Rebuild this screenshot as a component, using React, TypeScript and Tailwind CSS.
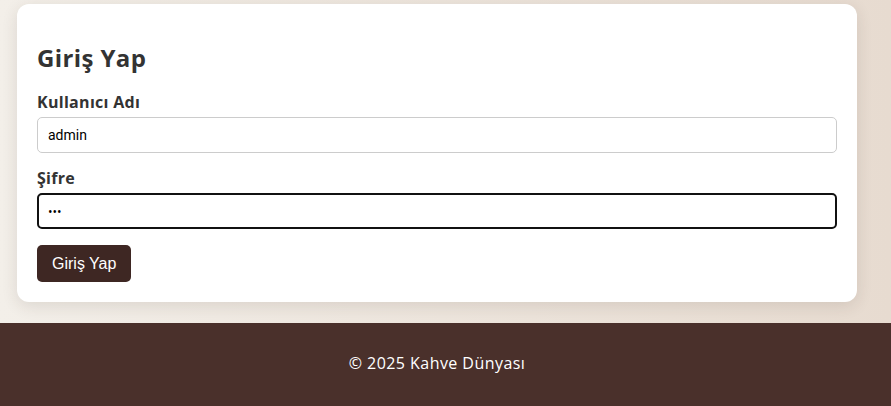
export default function App() {
  return (
    <div className="min-h-[406px] flex flex-col bg-gradient-to-r from-[#f3efe9] to-[#e7dbd0] font-['Open_Sans',sans-serif]">
      <main className="pt-[4px] pb-[21px] pl-[17px]">
        <div className="w-[840px] bg-white rounded-[12px] p-[20px] shadow-[0_4px_16px_rgba(60,40,30,0.12)]">
          <h2 className="mt-[20px] mb-[20px] text-[24px] leading-[28px] font-bold tracking-[0.4px] text-[#333]">Giriş Yap</h2>
          <form className="flex flex-col">
            <label className="text-[16px] leading-[20px] font-bold tracking-[0.3px] text-[#333] mb-[5px]">Kullanıcı Adı</label>
            <input
              type="text"
              defaultValue="admin"
              className="h-[36px] px-[10px] border border-[#ccc] rounded-[5px] text-[14px] text-black font-['Roboto',sans-serif] outline-none"
            />
            <label className="mt-[15px] text-[16px] leading-[20px] font-bold tracking-[0.3px] text-[#333] mb-[5px]">Şifre</label>
            <input
              type="password"
              defaultValue="123"
              autoFocus
              className="h-[36px] px-[9px] border-2 border-[#111] rounded-[5px] text-[12px] text-black outline-none"
            />
            <div className="mt-[16px]">
              <button
                type="button"
                className="h-[37px] px-[15px] bg-[#3e2723] text-white rounded-[5px] text-[16px] font-['Liberation_Sans',sans-serif]"
              >
                Giriş Yap
              </button>
            </div>
          </form>
        </div>
      </main>
      <footer className="flex-1 bg-[#4a302b] text-white text-[16px] tracking-[0.45px] flex items-center justify-center pb-[4px] pr-[17px]">
        © 2025 Kahve Dünyası
      </footer>
    </div>
  );
}
